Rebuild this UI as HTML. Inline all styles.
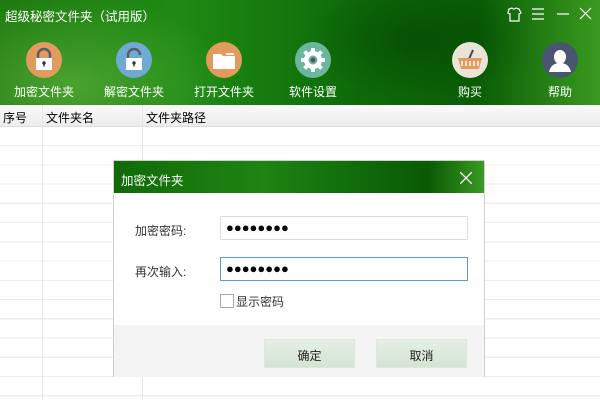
<!DOCTYPE html>
<html><head><meta charset="utf-8"><style>
*{margin:0;padding:0;box-sizing:border-box}
body{width:600px;height:400px;overflow:hidden;background:#fff;font-family:"Liberation Sans","Noto Sans CJK SC",sans-serif;font-size:12px;position:relative}
.hdr{position:absolute;left:0;top:0;width:600px;height:105px;background:radial-gradient(ellipse 160px 90px at 70px 85px,rgba(110,190,70,.55),transparent),radial-gradient(ellipse 120px 60px at 420px 40px,rgba(0,60,0,.5),transparent),linear-gradient(90deg,#1f7a10 0%,#1e8a14 30%,#0d6a08 60%,#0a5e06 80%,#3a9a20 100%)}
.title{position:absolute;left:5px;top:6px;color:#fff;font-size:12.5px}
.ic{position:absolute;top:42px;width:36px;height:36px;border-radius:50%}
.lbl{position:absolute;top:83px;color:#fff;font-size:12px;width:90px;text-align:center}
.th{position:absolute;top:105px;left:0;width:600px;height:22px;background:linear-gradient(#fafafa,#ececec);border-bottom:1px solid #ddd;font-size:12px}
.th span{position:absolute;top:4px}
.grid{position:absolute;top:127px;left:0;width:600px;height:273px;background:repeating-linear-gradient(#fff 0,#fff 18px,#eeeeee 18px,#eeeeee 19.25px)}
.vl{position:absolute;top:105px;width:1px;height:295px;background:#e6e6e6}
.dlg{position:absolute;left:113px;top:160px;width:372px;height:217px;border:1px solid #d0d0d0;background:#fff}
.dt{height:32px;background:linear-gradient(90deg,#106a06,#1e8412 40%,#0d6808 70%,#0a5a04 85%,#3a9a22);color:#fff;font-size:12.5px;padding:9px 0 0 7px;position:relative}
.ft{position:absolute;left:0;top:164px;width:370px;height:52px;background:#f4f4f4}
.inp{position:absolute;left:106px;width:248px;height:24px;border:1px solid #ddd;font-size:13px;padding:3px 0 0 5px;color:#000}
.fl{position:absolute;left:21px;font-size:12px;color:#333}
.btn{position:absolute;top:178px;width:91px;height:29px;background:linear-gradient(#e6efe6,#d3e4d4);border:1px solid #dfe7df;text-align:center;padding-top:7px;font-size:12px;color:#222}
</style></head><body>
<div class="hdr">
<div class="title">超级秘密文件夹（试用版）</div>
<svg style="position:absolute;left:505px;top:6px" width="90" height="16" viewBox="0 0 90 16" fill="none" stroke="#fff" stroke-width="1.2">
<path d="M4 3l3-1q2 2 4 0l3 1 2 4-2 1v7H5V8L3 7z"/>
<path d="M27 3h12M27 8h12M27 13h12"/>
<path d="M52 8h12"/>
<path d="M75 2l11 11M86 2L75 13"/>
</svg>
<div class="ic" style="left:26px;background:#e39a5e"><svg width="36" height="36"><path d="M12 17v-4a6 6 0 0 1 12 0v4" stroke="#555c6a" stroke-width="2.4" fill="none"/><rect x="10" y="16" width="16" height="12" fill="#fff"/><circle cx="18" cy="21" r="1.7" fill="#333"/><rect x="17.3" y="21" width="1.4" height="3.5" fill="#333"/></svg></div>
<div class="ic" style="left:116px;background:#6fa9d4"><svg width="36" height="36"><path d="M12 17v-4a6 6 0 0 1 12 0" stroke="#555c6a" stroke-width="2.4" fill="none"/><rect x="10" y="16" width="16" height="12" fill="#fff"/><circle cx="18" cy="21" r="1.7" fill="#333"/><rect x="17.3" y="21" width="1.4" height="3.5" fill="#333"/></svg></div>
<div class="ic" style="left:206px;background:#e39a5e"><svg width="36" height="36"><path d="M7 12h8l2 2h12v13H7z" fill="#fff"/><path d="M20 11h8v2h-8z" fill="#eee"/></svg></div>
<div class="ic" style="left:295px;background:#6bb79e"><svg width="36" height="36"><g fill="#fff"><circle cx="18" cy="18" r="9"/><rect x="16" y="6" width="4" height="24"/><rect x="6" y="16" width="24" height="4"/><rect x="16" y="6" width="4" height="24" transform="rotate(45 18 18)"/><rect x="16" y="6" width="4" height="24" transform="rotate(-45 18 18)"/></g><circle cx="18" cy="18" r="4.5" fill="#6bb79e"/><circle cx="18" cy="18" r="2.5" fill="#556"/></svg></div>
<div class="ic" style="left:452px;background:#e8e4d8"><svg width="36" height="36"><path d="M21 8l-4 9" stroke="#445" stroke-width="2"/><path d="M6 16h24l-3 11H9z" fill="#e89a5e"/><path d="M10 19v5M14 19v5M18 19v5M22 19v5M26 19v5" stroke="#fff" stroke-width="1.5"/></svg></div>
<div class="ic" style="left:542px;background:#4a5670"><svg width="36" height="36"><ellipse cx="18" cy="15" rx="6" ry="7" fill="#fff"/><path d="M7 30q2-9 11-9t11 9z" fill="#fff"/></svg></div>
<div class="lbl" style="left:-1px">加密文件夹</div>
<div class="lbl" style="left:89px">解密文件夹</div>
<div class="lbl" style="left:179px">打开文件夹</div>
<div class="lbl" style="left:268px">软件设置</div>
<div class="lbl" style="left:425px">购买</div>
<div class="lbl" style="left:515px">帮助</div>
</div>
<div class="grid"></div>
<div class="th"><span style="left:3px">序号</span><span style="left:46px">文件夹名</span><span style="left:146px">文件夹路径</span></div>
<div class="vl" style="left:42px"></div><div class="vl" style="left:142px"></div>
<div class="dlg">
<div class="dt">加密文件夹<svg style="position:absolute;right:12px;top:11px" width="12" height="12" stroke="#fff" stroke-width="1.3"><path d="M0 0l12 12M12 0L0 12"/></svg></div>
<div class="fl" style="top:61px">加密密码:</div>
<div class="inp" style="top:55px">●●●●●●●●</div>
<div class="fl" style="top:102px">再次输入:</div>
<div class="inp" style="top:96px;border-color:#5b9bd5">●●●●●●●●</div>
<div style="position:absolute;left:106px;top:133px;width:14px;height:14px;border:1px solid #aaa"></div>
<div style="position:absolute;left:122px;top:132px;color:#333">显示密码</div>
<div class="ft"></div>
<div class="btn" style="left:150px">确定</div>
<div class="btn" style="left:262px">取消</div>
</div>
</body></html>
